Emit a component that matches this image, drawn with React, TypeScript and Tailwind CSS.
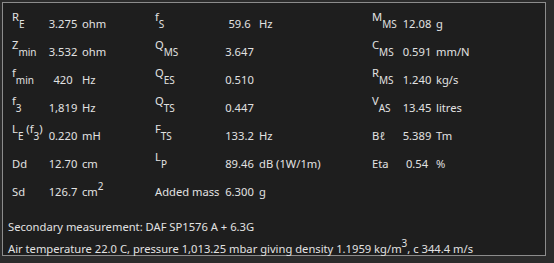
const font = { fontFamily: '"Noto Sans", "Open Sans", sans-serif' };

function Sym({ m, s }: { m: string; s: string }) {
    return (
        <span>
            <span className="align-[7px] leading-none">{m}</span>
            <span className="text-[10px] leading-none">{s}</span>
        </span>
    );
}

type Item = [React.ReactNode, string, React.ReactNode];

const rows: (Item | null)[][] = [
    [
        [<Sym m="R" s="E" />, "3.275", "ohm"],
        [<Sym m="f" s="S" />, "59.6", "Hz"],
        [<Sym m="M" s="MS" />, "12.08", "g"],
    ],
    [
        [<Sym m="Z" s="min" />, "3.532", "ohm"],
        [<Sym m="Q" s="MS" />, "3.647", ""],
        [<Sym m="C" s="MS" />, "0.591", "mm/N"],
    ],
    [
        [<Sym m="f" s="min" />, "420", "Hz"],
        [<Sym m="Q" s="ES" />, "0.510", ""],
        [<Sym m="R" s="MS" />, "1.240", "kg/s"],
    ],
    [
        [<Sym m="f" s="3" />, "1,819", "Hz"],
        [<Sym m="Q" s="TS" />, "0.447", ""],
        [<Sym m="V" s="AS" />, "13.45", "litres"],
    ],
    [
        [
            <span>
                <Sym m="L" s="E" />
                <span className="align-[7px] leading-none"> (f</span>
                <span className="text-[10px] leading-none">3</span>
                <span className="align-[7px] leading-none">)</span>
            </span>,
            "0.220",
            "mH",
        ],
        [<Sym m="F" s="TS" />, "133.2", "Hz"],
        ["Bℓ", "5.389", "Tm"],
    ],
    [
        ["Dd", "12.70", "cm"],
        [<Sym m="L" s="P" />, "89.46", "dB (1W/1m)"],
        ["Eta", "0.54", "%"],
    ],
    [
        [
            "Sd",
            "126.7",
            <span>
                cm<span className="align-[6px] text-[10px] leading-none">2</span>
            </span>,
        ],
        ["Added mass", "6.300", "g"],
        null,
    ],
];

export default function App() {
    return (
        <div className="w-[554px] h-[263px] bg-[#2b2b2b] pt-[2px] pl-[2px] text-[11.2px] text-[#e2e2e2] whitespace-nowrap" style={font}>
            <div className="w-[544px] h-[254px] border border-[#8c8c8c] bg-[#1e1e1e] pl-[5px] pt-[7px]">
                <div className="pl-[4px]">
                    {rows.map((r, i) => (
                        <div
                            key={i}
                            className="grid grid-cols-[32px_38px_73px_65px_39px_113px_26px_38px_1fr] h-[28px] leading-[28px]"
                        >
                            {r.map((c, j) =>
                                c ? (
                                    [
                                        <div key={j + "l"}>{c[0]}</div>,
                                        <div key={j + "v"} className="text-center">{c[1]}</div>,
                                        <div key={j + "u"}>{c[2]}</div>,
                                    ]
                                ) : null
                            )}
                        </div>
                    ))}
                </div>
                <div className="mt-[10px] leading-[22px]">
                    <div>Secondary measurement: DAF SP1576 A + 6.3G</div>
                    <div>
                        Air temperature 22.0 C, pressure 1,013.25 mbar giving density 1.1959 kg/m
                        <span className="align-[6px] text-[10px] leading-none">3</span>, c 344.4 m/s
                    </div>
                </div>
            </div>
        </div>
    );
}
